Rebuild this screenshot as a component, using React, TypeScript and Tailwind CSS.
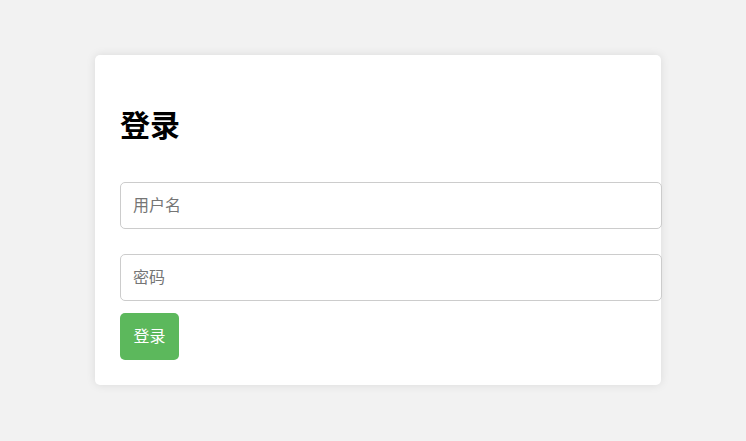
import React from "react";

export default function App() {
  return (
    <div
      className="min-h-screen w-full bg-[#f2f2f2] pt-[55px]"
      style={{ fontFamily: '"Liberation Sans", "Noto Sans CJK SC", sans-serif' }}
    >
      <div className="ml-[95px] w-[566px] h-[330px] bg-white rounded-[5px] shadow-[0_0_10px_rgba(0,0,0,0.1)] px-[25px] pt-[25px] pb-[25px] flex flex-col">
        <h2 className="mt-[28px] text-[30px] leading-[36px] font-bold text-black">登录</h2>
        <input
          type="text"
          placeholder="用户名"
          className="box-content mt-[38px] w-full h-[21px] py-[12px] px-[12px] border border-[#cccccc] rounded-[5px] text-[16px] leading-[21px] placeholder:text-[#757575] outline-none"
        />
        <input
          type="password"
          placeholder="密码"
          className="box-content mt-[25px] w-full h-[21px] py-[12px] px-[12px] border border-[#cccccc] rounded-[5px] text-[16px] leading-[21px] placeholder:text-[#757575] outline-none"
        />
        <div className="mt-[12px]">
          <button className="h-[47px] w-[59px] bg-[#5cb85c] text-white text-[16px] rounded-[5px]">
            登录
          </button>
        </div>
      </div>
    </div>
  );
}
